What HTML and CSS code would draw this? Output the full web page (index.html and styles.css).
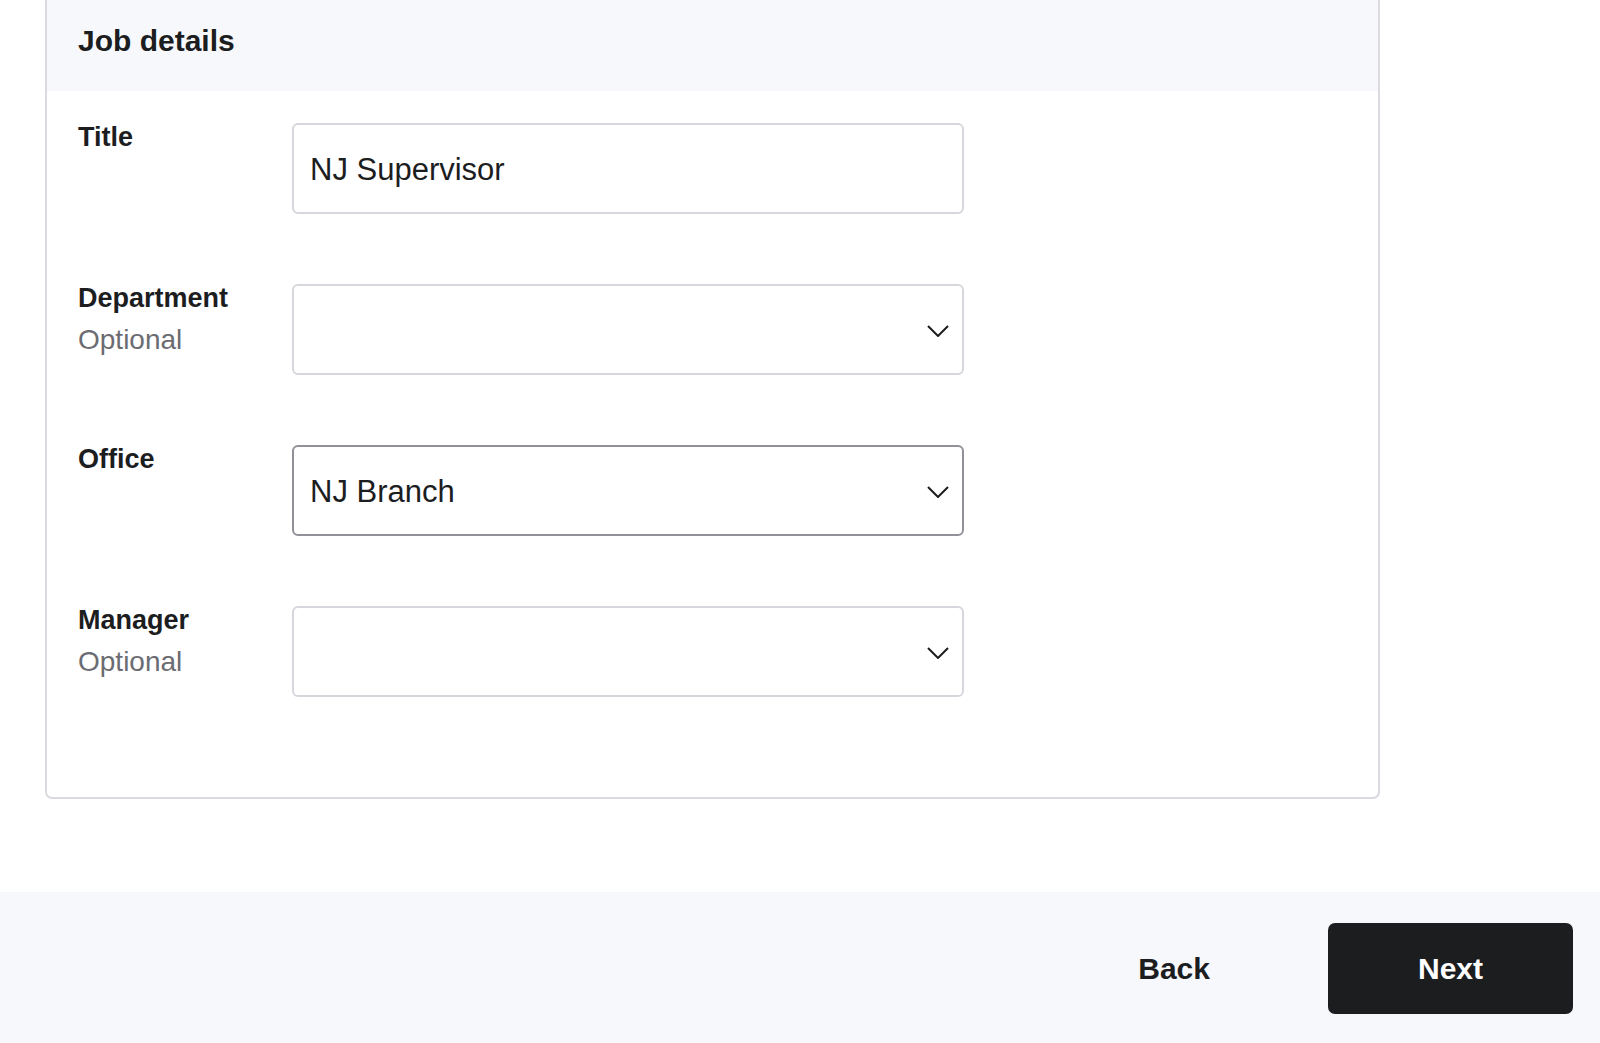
FILE: index.html
```html
<!DOCTYPE html>
<html lang="en">
<head>
<meta charset="utf-8">
<title>Job details</title>
<link rel="stylesheet" href="styles.css">
</head>
<body>
<main class="page">
  <section class="card">
    <header class="card-header">
      <h2 class="card-title">Job details</h2>
    </header>
    <div class="card-body">
      <div class="row">
        <div class="label"><div class="label-name">Title</div></div>
        <div class="field"><div class="control">NJ Supervisor</div></div>
      </div>
      <div class="row">
        <div class="label"><div class="label-name">Department</div><div class="label-hint">Optional</div></div>
        <div class="field"><div class="control select"><span class="value"></span><svg class="chev" width="22" height="12" viewBox="0 0 22 12"><path d="M1 1 L11 11 L21 1" fill="none" stroke="#1c1d1f" stroke-width="2"/></svg></div></div>
      </div>
      <div class="row">
        <div class="label"><div class="label-name">Office</div></div>
        <div class="field"><div class="control select active"><span class="value">NJ Branch</span><svg class="chev" width="22" height="12" viewBox="0 0 22 12"><path d="M1 1 L11 11 L21 1" fill="none" stroke="#1c1d1f" stroke-width="2"/></svg></div></div>
      </div>
      <div class="row">
        <div class="label"><div class="label-name">Manager</div><div class="label-hint">Optional</div></div>
        <div class="field"><div class="control select"><span class="value"></span><svg class="chev" width="22" height="12" viewBox="0 0 22 12"><path d="M1 1 L11 11 L21 1" fill="none" stroke="#1c1d1f" stroke-width="2"/></svg></div></div>
      </div>
    </div>
  </section>
</main>
<footer class="footer">
  <button class="btn btn-ghost">Back</button>
  <button class="btn btn-primary">Next</button>
</footer>
</body>
</html>
```
FILE: styles.css
```css
* { box-sizing: border-box; }
html, body { margin: 0; padding: 0; }
body {
  width: 1600px;
  height: 1043px;
  overflow: hidden;
  background: #ffffff;
  font-family: "Liberation Sans", Arial, sans-serif;
  color: #1c1d1f;
  display: flex;
  flex-direction: column;
}
.page {
  padding: 0 220px 0 45px;
  height: 892px;
}
.card {
  width: 1335px;
  border: 2px solid #dadae0;
  border-top: none;
  border-radius: 0 0 7px 7px;
  background: #fff;
}
.card-header {
  background: #f7f8fb;
  padding: 21px 31px 30px;
}
.card-title {
  margin: 0;
  font-size: 30px;
  line-height: 40px;
  font-weight: 700;
}
.card-body {
  padding: 26px 31px 100px;
  display: flex;
  flex-direction: column;
  gap: 64px;
}
.row {
  display: flex;
}
.label {
  width: 214px;
  flex: none;
}
.label-name {
  font-size: 27px;
  line-height: 41px;
  font-weight: 700;
}
.label-hint {
  font-size: 28px;
  line-height: 41px;
  color: #6b6c72;
}
.field {
  padding-top: 6px;
}
.control {
  width: 672px;
  height: 91px;
  border: 2px solid #d6d7dd;
  border-radius: 6px;
  padding: 3px 13px 0 16px;
  font-size: 31px;
  display: flex;
  align-items: center;
  justify-content: space-between;
  color: #1c1d1f;
}
.control.active {
  border-color: #909198;
}
.chev { flex: none; margin-top: 0; }
.footer {
  flex: 1;
  background: #f7f8fb;
  display: flex;
  justify-content: flex-end;
  align-items: center;
  gap: 28px;
  padding: 2px 27px 0 0;
}
.btn {
  font-family: "Liberation Sans", Arial, sans-serif;
  font-size: 30px;
  font-weight: 700;
  height: 91px;
  padding: 0 90px;
  border-radius: 7px;
  border: none;
  cursor: pointer;
}
.btn-ghost {
  background: transparent;
  color: #1c1d1f;
}
.btn-primary {
  background: #1c1d1f;
  color: #ffffff;
}
```
